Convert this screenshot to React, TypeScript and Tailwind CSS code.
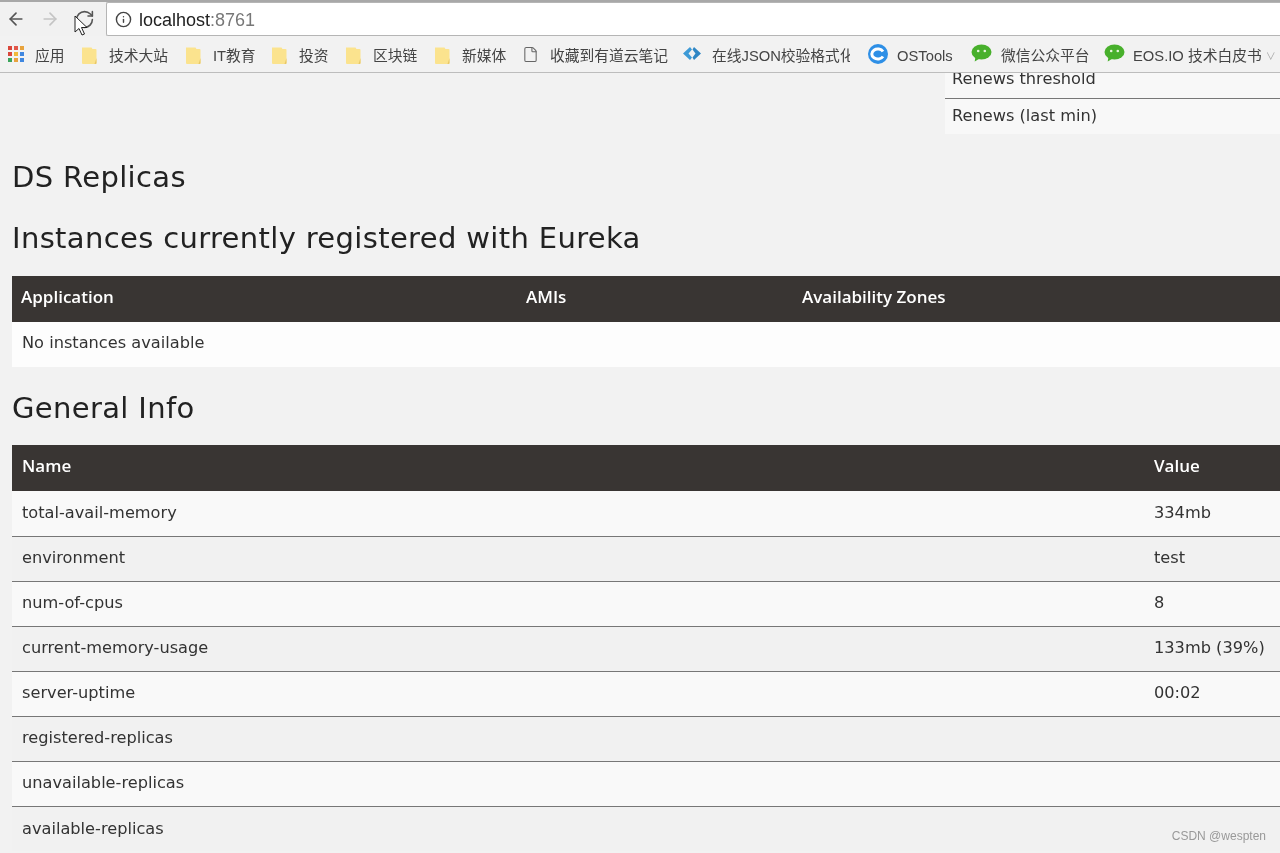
import { ArrowLeft, ArrowRight, File, Info, RotateCw } from 'lucide-react';

const cjk = '"Liberation Sans", "Noto Sans CJK SC", sans-serif';
const headFont = { fontFamily: '"Open Sans", sans-serif' };

const Folder = () => (
  <svg width="16" height="19" viewBox="0 0 16 19" className="shrink-0 -mt-[2px]">
    <path d="M1 1.500h9.500l1 1.500H14.500a1 1 0 0 1 1 1V17a1 1 0 0 1-1 1H2a1 1 0 0 1-1-1z" fill="#fbe38e" />
    <path d="M15.500 12l-2 6h1a1 1 0 0 0 1-1z" fill="#e8c766" />
  </svg>
);

const WeChat = () => (
  <svg width="21" height="19" viewBox="0 0 21 19" className="shrink-0 -mt-[5px]">
    <ellipse cx="10.500" cy="8" rx="10" ry="7.600" fill="#48b02c" />
    <path d="M4.500 12.500l-.8 5 5-3z" fill="#48b02c" />
    <circle cx="7.200" cy="7" r="1.300" fill="#e6f5dc" />
    <circle cx="13.800" cy="7" r="1.300" fill="#e6f5dc" />
  </svg>
);

const AppsGrid = () => {
  const dots = ['#d9473b', '#e2574a', '#e8a33d', '#d9473b', '#f0b93a', '#3f87e0', '#3ba55c', '#e8a33d', '#3f87e0'];
  return (
    <div className="grid grid-cols-3 gap-[2px] w-[16px] shrink-0 -mt-[4px]">
      {dots.map((c, i) => (
        <span key={i} className="w-[4px] h-[4px]" style={{ backgroundColor: c }} />
      ))}
    </div>
  );
};

const Bookmark = ({ icon, label, className }: { icon: JSX.Element; label: string; className: string }) => (
  <div className={`flex items-center shrink-0 ${className}`}>
    {icon}
    <span className="whitespace-nowrap">{label}</span>
  </div>
);

const generalInfo = [
  ['total-avail-memory', '334mb'],
  ['environment', 'test'],
  ['num-of-cpus', '8'],
  ['current-memory-usage', '133mb (39%)'],
  ['server-uptime', '00:02'],
  ['registered-replicas', ''],
  ['unavailable-replicas', ''],
  ['available-replicas', ''],
];

export default function App() {
  return (
    <div className="w-[1280px] h-[853px] overflow-hidden relative bg-[#f2f2f2] text-[#333] blur-[0.35px]" style={{ fontFamily: '"DejaVu Sans", sans-serif' }}>
      {/* browser toolbar */}
      <div className="h-[36px] flex items-center bg-[#f1f1f1] border-t-2 border-[#a8a8a8]">
        <ArrowLeft size={20} strokeWidth={2} className="ml-[6px] text-[#555]" />
        <ArrowRight size={20} strokeWidth={2} className="ml-[14px] text-[#c4c4c4]" />
        <RotateCw size={21} strokeWidth={1.800} className="ml-[14px] text-[#555]" />
        <div className="ml-[11px] flex-1 h-[34px] bg-white border border-[#b5b5b5] rounded-l-[2px] border-r-0 flex items-center pl-[8px]">
          <Info size={17} strokeWidth={2} className="text-[#444]" />
          <span className="ml-[7px] pt-[2px] text-[18px] text-[#222]" style={{ fontFamily: '"Liberation Sans", sans-serif' }}>
            localhost<span className="text-[#777]">:8761</span>
          </span>
        </div>
      </div>

      {/* bookmarks bar */}
      <div className="h-[37px] flex items-center bg-[#f2f2f2] border-b border-[#bdbdbd] pl-[8px] pt-[4px] text-[14.750px] text-[#444]" style={{ fontFamily: cjk }}>
        <Bookmark icon={<AppsGrid />} label="应用" className="gap-[11px] w-[73px]" />
        <Bookmark icon={<Folder />} label="技术大站" className="gap-[12px] w-[104px]" />
        <Bookmark icon={<Folder />} label="IT教育" className="gap-[12px] w-[86px]" />
        <Bookmark icon={<Folder />} label="投资" className="gap-[12px] w-[74px]" />
        <Bookmark icon={<Folder />} label="区块链" className="gap-[12px] w-[89px]" />
        <Bookmark icon={<Folder />} label="新媒体" className="gap-[12px] w-[88px]" />
        <Bookmark icon={<File size={17} strokeWidth={1.500} className="text-[#666] shrink-0 -mt-[3px]" />} label="收藏到有道云笔记" className="gap-[11px] w-[160px]" />
        <Bookmark
          icon={
            <svg width="20" height="14" viewBox="0 0 20 14" className="shrink-0 -mt-[5px]">
              <path d="M8 0L1 6.500 8 13l2-2.500-3.500-4L10 2.500z" fill="#3d9ad6" />
              <path d="M12 0l7 6.500L12 13l-1.500-2.500 3-4-3-4z" fill="#2f86c4" />
            </svg>
          }
          label="在线JSON校验格式化"
          className="gap-[10px] w-[168px] overflow-hidden"
        />
        <div className="ml-[18px] flex items-center gap-[9px] shrink-0 w-[102px]">
          <svg width="20" height="20" viewBox="0 0 20 20" className="shrink-0 -mt-[4px]">
            <circle cx="10" cy="10" r="10" fill="#2e8fe6" />
            <path d="M15 7.500a6 5 0 1 0 0 5" fill="none" stroke="#fff" strokeWidth="3" />
          </svg>
          <span>OSTools</span>
        </div>
        <Bookmark icon={<WeChat />} label="微信公众平台" className="gap-[9px] w-[133px] ml-[1px]" />
        <Bookmark icon={<WeChat />} label="EOS.IO 技术白皮书" className="gap-[8px]" />
        <span className="ml-[4px] text-[10px] text-[#aaa]">∨</span>
      </div>

      {/* page */}
      <div className="pl-[12px]">
        <div className="flex justify-end h-[61px] overflow-hidden text-[16.200px]">
          <div className="w-[335px] bg-[#f8f8f8] h-[61px]">
            <div className="h-[26px] border-b border-[#777] pl-[7px] leading-[12px]">Renews threshold</div>
            <div className="pl-[7px] pt-[5px] leading-[24px]">Renews (last min)</div>
          </div>
        </div>

        <h1 className="mt-[25px] text-[29px] tracking-[0.35px] leading-[36px] text-[#222]">DS Replicas</h1>
        <h2 className="mt-[25px] text-[29px] tracking-[0.35px] leading-[36px] text-[#222]">Instances currently registered with Eureka</h2>

        <table className="mt-[20px] w-[1268px] table-fixed border-collapse text-[16.200px]">
          <colgroup>
            <col className="w-[505px]" />
            <col className="w-[276px]" />
            <col />
          </colgroup>
          <thead>
            <tr className="h-[46px] bg-[#393533] text-white text-left text-[17px]" style={headFont}>
              <th className="pl-[9px] pb-[4px] font-semibold">Application</th>
              <th className="pl-[9px] pb-[4px] font-semibold">AMIs</th>
              <th className="pl-[9px] pb-[4px] font-semibold">Availability Zones</th>
            </tr>
          </thead>
          <tbody>
            <tr className="h-[45px] bg-[#fdfdfd]">
              <td colSpan={3} className="pl-[10px] pb-[2px]">No instances available</td>
            </tr>
          </tbody>
        </table>

        <h2 className="mt-[23px] text-[29px] tracking-[0.35px] leading-[36px] text-[#222]">General Info</h2>

        <table className="mt-[19px] w-[1268px] table-fixed border-collapse text-[16.200px]">
          <colgroup>
            <col className="w-[1132px]" />
            <col />
          </colgroup>
          <thead>
            <tr className="h-[46px] bg-[#393533] text-white text-left text-[17px]" style={headFont}>
              <th className="pl-[10px] pb-[4px] font-semibold">Name</th>
              <th className="pl-[10px] pb-[4px] font-semibold">Value</th>
            </tr>
          </thead>
          <tbody>
            {generalInfo.map(([name, value], i) => (
              <tr key={name} className={`h-[45px] border-b border-[#777] last:border-b-0 ${i % 2 === 0 ? 'bg-[#f9f9f9]' : 'bg-[#f1f1f1]'}`}>
                <td className="pl-[10px]">{name}</td>
                <td className="pl-[10px]">{value}</td>
              </tr>
            ))}
          </tbody>
        </table>
      </div>

      {/* mouse cursor over the reload button */}
      <svg width="14" height="22" viewBox="0 0 14 22" className="absolute left-[74px] top-[15px]">
        <path d="M1 1v16l4-3.500 3 6.500 2.500-1-3-6.500H13z" fill="#fff" stroke="#222" strokeWidth="1" />
      </svg>

      <span className="absolute right-[14px] bottom-[8px] text-[12px] text-[#999]" style={{ fontFamily: '"Liberation Sans", sans-serif' }}>
        CSDN @wespten
      </span>
    </div>
  );
}
